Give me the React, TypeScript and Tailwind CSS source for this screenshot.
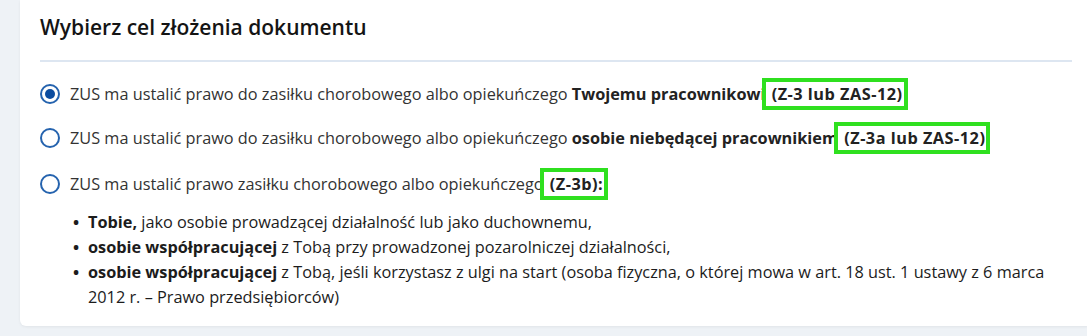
import React from "react";

function Radio({ checked }: { checked?: boolean }) {
  return (
    <span className="flex h-[20px] w-[20px] shrink-0 items-center justify-center rounded-full border-2 border-[#2563ae] bg-white">
      {checked && <span className="h-[10px] w-[10px] rounded-full bg-[#0b4c9f]" />}
    </span>
  );
}

function Box({ children }: { children: React.ReactNode }) {
  return (
    <span className="relative px-[2px] font-bold tracking-[0.5px] text-[#222]">
      {children}
      <span className="pointer-events-none absolute -left-[8px] -right-[3px] -top-[5px] -bottom-[5px] border-4 border-[#2fe01f]" />
    </span>
  );
}

export default function App() {
  return (
    <div
      className="h-[336px] w-full overflow-hidden bg-[#eef2f6]"
      style={{ fontFamily: '"Open Sans", "Noto Sans", sans-serif' }}
    >
      <div className="ml-[20px] h-[326px] w-[1072px] rounded-b-[6px] bg-white pl-[20px] pr-[20px] shadow-[0_1px_3px_rgba(0,0,0,0.06)]">
        <h2 className="pt-[13px] text-[21px] font-semibold leading-[28px] text-[#141414]">
          Wybierz cel złożenia dokumentu
        </h2>
        <div className="mt-[19px] h-[2px] w-full bg-[#dde6f1]" />

        <div className="mt-[20px] flex h-[24px] items-center gap-[10px] text-[16.3px] text-[#333]">
          <Radio checked />
          <span className="whitespace-nowrap">
            ZUS ma ustalić prawo do zasiłku chorobowego albo opiekuńczego{" "}
            <b className="font-bold text-[#222]">Twojemu pracownikowi</b>{" "}
            <Box>(Z-3 lub ZAS-12)</Box>
          </span>
        </div>

        <div className="mt-[20px] flex h-[24px] items-center gap-[10px] text-[16.3px] text-[#333]">
          <Radio />
          <span className="whitespace-nowrap">
            ZUS ma ustalić prawo do zasiłku chorobowego albo opiekuńczego{" "}
            <b className="font-bold text-[#222]">osobie niebędącej pracownikiem</b>{" "}
            <Box>(Z-3a lub ZAS-12)</Box>
          </span>
        </div>

        <div className="mt-[22px] flex h-[24px] items-center gap-[10px] text-[16.3px] text-[#333]">
          <Radio />
          <span className="whitespace-nowrap">
            ZUS ma ustalić prawo zasiłku chorobowego albo opiekuńczego{" "}
            <Box>(Z-3b):</Box>
          </span>
        </div>

        <ul className="mt-[14px] pl-[30px] text-[16.3px] leading-[25px] text-[#1c1c1c]">
          <li className="flex">
            <span className="w-[18px] shrink-0 pl-[3px] font-bold">•</span>
            <span>
              <b className="font-bold">Tobie,</b> jako osobie prowadzącej działalność lub jako duchownemu,
            </span>
          </li>
          <li className="flex">
            <span className="w-[18px] shrink-0 pl-[3px] font-bold">•</span>
            <span>
              <b className="font-bold">osobie współpracującej</b> z Tobą przy prowadzonej pozarolniczej działalności,
            </span>
          </li>
          <li className="flex">
            <span className="w-[18px] shrink-0 pl-[3px] font-bold">•</span>
            <span>
              <b className="font-bold">osobie współpracującej</b> z Tobą, jeśli korzystasz z ulgi na start (osoba
              fizyczna, o której mowa w art. 18 ust. 1 ustawy z 6 marca 2012 r. – Prawo przedsiębiorców)
            </span>
          </li>
        </ul>
      </div>
    </div>
  );
}
